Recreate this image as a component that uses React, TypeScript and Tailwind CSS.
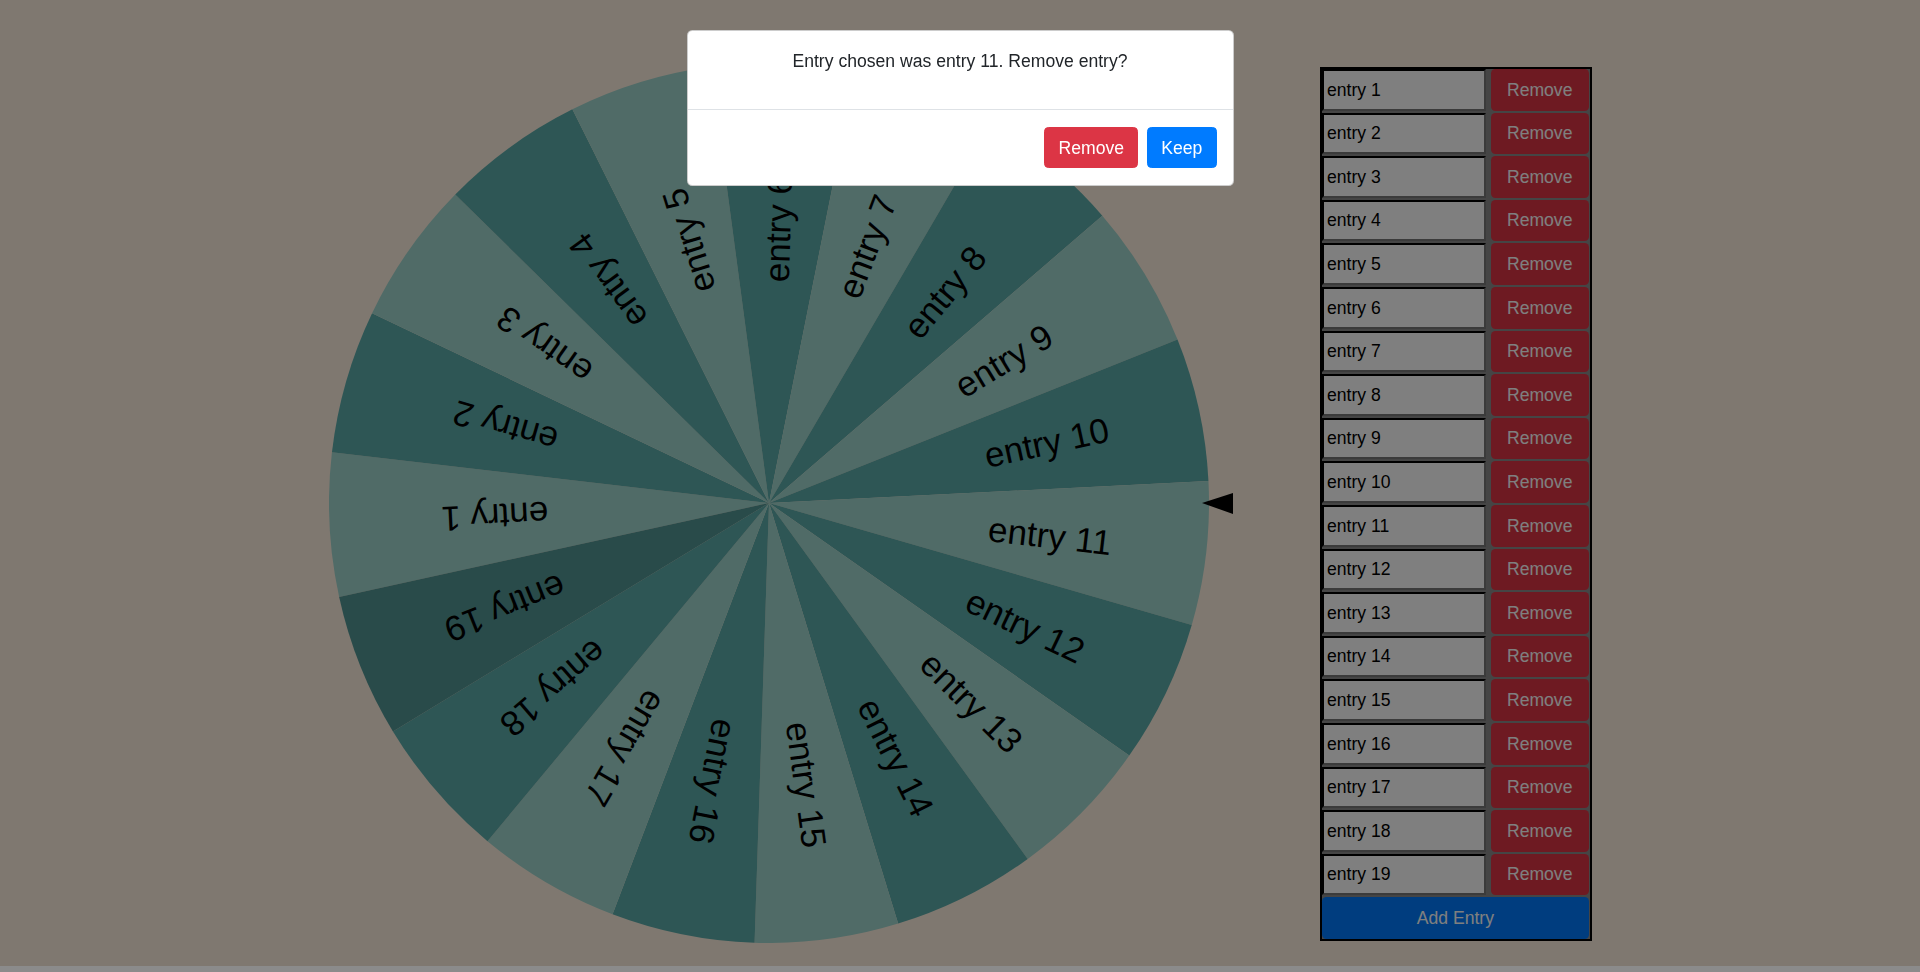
import React from "react";

const CX = 440;
const CY = 440;
const R = 440;
const N = 19;
const SEG = 360 / N;
const START = 167.67;

function polar(r: number, deg: number): [number, number] {
  const a = (deg * Math.PI) / 180;
  return [CX + r * Math.cos(a), CY + r * Math.sin(a)];
}

const entries = Array.from({ length: N }, (_, i) => `entry ${i + 1}`);

function Wheel() {
  return (
    <svg width={905} height={880} viewBox="0 0 905 880" className="block shrink-0">
      {entries.map((label, i) => {
        const a0 = START + i * SEG;
        const a1 = a0 + SEG;
        const [x0, y0] = polar(R, a0);
        const [x1, y1] = polar(R, a1);
        const fill = i === N - 1 ? "#529694" : i % 2 === 0 ? "#a0d6ce" : "#5cacaa";
        return (
          <path
            key={`s${i}`}
            d={`M ${CX} ${CY} L ${x0} ${y0} A ${R} ${R} 0 0 1 ${x1} ${y1} Z`}
            fill={fill}
          />
        );
      })}
      {entries.map((label, i) => {
        const mid = START + i * SEG + SEG / 2;
        return (
          <text
            key={`t${i}`}
            x={CX + 221}
            y={CY}
            fontSize={35}
            fontFamily="'Liberation Sans', Arial, sans-serif"
            fill="#000"
            dominantBaseline="central"
            transform={`rotate(${mid} ${CX} ${CY})`}
          >
            {label}
          </text>
        );
      })}
      <polygon points="873,440 904,430 904,451" fill="#000" />
    </svg>
  );
}

function Panel() {
  return (
    <div className="ml-[86px] mt-[4px] flex w-[272px] flex-col border-2 border-black bg-[#8a8a8a]">
      {entries.map((label) => (
        <div key={label} className="mb-[2px] flex h-[41.6px] items-stretch">
          <div className="flex w-[164px] items-center border-2 border-t-black border-l-black border-b-[#767676] border-r-[#767676] bg-white pl-[3px] text-[17.6px] text-black">
            {label}
          </div>
          <button className="ml-[4.7px] flex w-[98px] items-center justify-center rounded-[4.4px] bg-[#dc3545] text-[17.6px] text-white">
            Remove
          </button>
        </div>
      ))}
      <button className="flex h-[41.6px] w-[266.7px] items-center justify-center rounded-[4.4px] bg-[#007bff] text-[17.6px] text-white">
        Add Entry
      </button>
    </div>
  );
}

export default function App() {
  return (
    <div className="relative min-h-screen w-full overflow-hidden bg-[#fff0e0] font-['Liberation_Sans',Arial,sans-serif]">
      <div className="flex items-start pl-[329px] pt-[63px]">
        <Wheel />
        <Panel />
      </div>

      <div className="fixed inset-0 bg-[rgba(0,0,0,0.5)]" />

      <div className="fixed inset-0 flex justify-center">
        <div className="mt-[30px] h-fit w-[547px] rounded-[5.3px] border border-[rgba(0,0,0,0.2)] bg-white">
          <div className="p-[17px]">
            <p className="mb-[18px] text-center text-[17.6px] leading-[26.4px] text-[#212529]">
              Entry chosen was entry 11. Remove entry?
            </p>
          </div>
          <div className="flex justify-end border-t border-[#dee2e6] pl-[13.2px] pr-[11.6px] pt-[12.5px] pb-[12px]">
            <button className="m-[4.4px] h-[41px] rounded-[4.4px] border border-[#dc3545] bg-[#dc3545] px-[13.2px] text-[17.6px] text-white">
              Remove
            </button>
            <button className="m-[4.4px] h-[41px] rounded-[4.4px] border border-[#007bff] bg-[#007bff] px-[13.2px] text-[17.6px] text-white">
              Keep
            </button>
          </div>
        </div>
      </div>

      <div className="fixed bottom-0 left-0 right-0 h-[6px] bg-[#8b8b8b]" />
    </div>
  );
}
